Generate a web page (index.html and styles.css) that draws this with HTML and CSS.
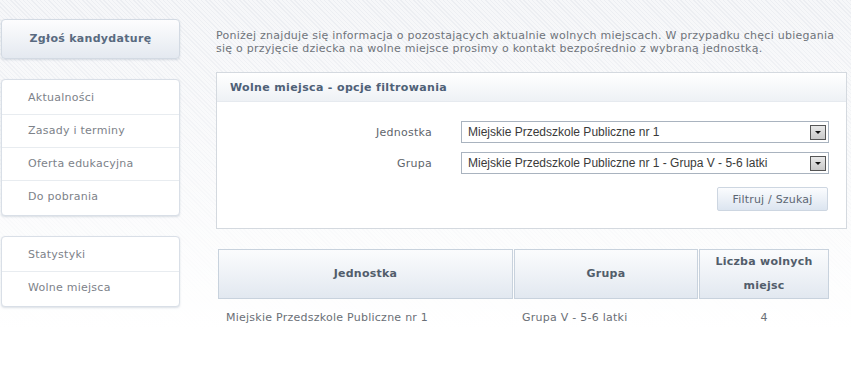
FILE: index.html
```html
<!DOCTYPE html>
<html lang="pl">
<head>
  <meta charset="UTF-8">
  <title>Wolne miejsca</title>
  <link rel="stylesheet" href="styles.css">
</head>
<body>
  <div class="page">
    <div class="sidebar">
      <a class="apply" href="#">Zgłoś kandydaturę</a>
      <ul class="menu">
        <li>Aktualności</li>
        <li>Zasady i terminy</li>
        <li>Oferta edukacyjna</li>
        <li>Do pobrania</li>
      </ul>
      <ul class="menu">
        <li>Statystyki</li>
        <li>Wolne miejsca</li>
      </ul>
    </div>

    <div class="main">
      <p class="intro">Poniżej znajduje się informacja o pozostających aktualnie wolnych miejscach. W przypadku chęci ubiegania się o przyjęcie dziecka na wolne miejsce prosimy o kontakt bezpośrednio z wybraną jednostką.</p>

      <div class="filter">
        <div class="filter-head">Wolne miejsca - opcje filtrowania</div>
        <div class="filter-body">
          <div class="row">
            <label>Jednostka</label>
            <div class="select"><span>Miejskie Przedszkole Publiczne nr 1</span><i class="arrow"></i></div>
          </div>
          <div class="row">
            <label>Grupa</label>
            <div class="select"><span>Miejskie Przedszkole Publiczne nr 1 - Grupa V - 5-6 latki</span><i class="arrow"></i></div>
          </div>
          <div class="actions">
            <button class="btn">Filtruj / Szukaj</button>
          </div>
        </div>
      </div>

      <table class="results">
        <tr>
          <th class="c1">Jednostka</th>
          <th class="c2">Grupa</th>
          <th class="c3">Liczba wolnych miejsc</th>
        </tr>
        <tr>
          <td>Miejskie Przedszkole Publiczne nr 1</td>
          <td>Grupa V - 5-6 latki</td>
          <td class="num">4</td>
        </tr>
      </table>
    </div>
  </div>
</body>
</html>
```

FILE: styles.css
```css
body {
  margin: 0;
  font-family: "DejaVu Sans", Verdana, sans-serif;
  font-size: 11px;
  letter-spacing: 0.25px;
  color: #6f747b;
  background:
    linear-gradient(to bottom, rgba(255,255,255,0) 0, #fff 330px),
    repeating-linear-gradient(45deg, #eceef2 0, #eceef2 1px, #f6f7f9 1px, #f6f7f9 3px);
  height: 368px;
}

.page {
  display: flex;
  align-items: flex-start;
}

.sidebar {
  width: 180px;
  padding-top: 19px;
}

.apply {
  display: block;
  height: 38px;
  line-height: 38px;
  margin-left: 1px;
  text-align: center;
  font-weight: bold;
  font-size: 11px;
  letter-spacing: 0.3px;
  color: #596a80;
  text-decoration: none;
  border: 1px solid #d3dae3;
  border-radius: 4px;
  background: linear-gradient(#fdfdfe, #e4e9f0);
  box-shadow: 0 1px 2px rgba(120,135,160,0.25);
}

.menu {
  list-style: none;
  margin: 20px 0 0 1px;
  padding: 2px 0;
  background: #fff;
  border: 1px solid #d9dfe7;
  border-radius: 4px;
  box-shadow: 0 1px 2px rgba(120,135,160,0.25);
}

.menu li {
  height: 32px;
  line-height: 32px;
  padding-left: 26px;
  border-top: 1px solid #e8ecf0;
  color: #7d8289;
}

.menu li:first-child {
  border-top: none;
}

.main {
  margin-left: 36px;
  width: 631px;
}

.intro {
  margin: 29px 0 0;
  line-height: 13px;
}

.filter {
  margin-top: 17px;
  border: 1px solid #d4d9df;
  background: #fff;
  height: 155px;
}

.filter-head {
  height: 28px;
  line-height: 30px;
  padding-left: 13px;
  font-weight: bold;
  letter-spacing: 0.35px;
  color: #4f6177;
  background: linear-gradient(#ffffff, #eef1f5);
  border-bottom: 1px solid #e6eaef;
}

.filter-body {
  padding-top: 19px;
}

.row {
  display: flex;
  align-items: center;
  margin-bottom: 9px;
}

.row label {
  width: 215px;
  text-align: right;
  padding-right: 29px;
  color: #60656c;
}

.select {
  display: flex;
  align-items: center;
  justify-content: space-between;
  width: 360px;
  height: 20px;
  border: 1px solid #a9b3bf;
  background: #fff;
  padding-left: 6px;
  font-family: "Liberation Sans", Arial, sans-serif;
  font-size: 12px;
  letter-spacing: 0;
  color: #3a3a3a;
}

.arrow {
  width: 14px;
  height: 13px;
  margin-right: 2px;
  border: 1px solid #555;
  background: linear-gradient(#e8e8e8, #c9c9c9);
  position: relative;
}

.arrow::after {
  content: "";
  position: absolute;
  left: 4px;
  top: 5px;
  border-left: 3px solid transparent;
  border-right: 3px solid transparent;
  border-top: 3px solid #111;
}

.actions {
  display: flex;
  justify-content: flex-end;
  padding-right: 18px;
  padding-top: 4px;
}

.btn {
  width: 111px;
  height: 24px;
  font-family: "DejaVu Sans", Verdana, sans-serif;
  font-size: 11px;
  letter-spacing: 0.2px;
  color: #5c6673;
  border: 1px solid #cdd6e1;
  border-radius: 2px;
  background: linear-gradient(#fbfcfe, #dce5f0);
}

.results {
  margin: 20px 0 0 1px;
  border-collapse: separate;
  border-spacing: 1px 0;
  width: 613px;
  table-layout: fixed;
}

.results th {
  height: 46px;
  padding: 0 6px;
  border: 1px solid #c8d2dd;
  background: linear-gradient(#fbfcfd, #e2e8f0);
  color: #525d6b;
  font-size: 11px;
  line-height: 24px;
}

.results .c1 { width: 281px; }
.results .c2 { width: 170px; }
.results .c3 { width: 116px; }

.results td {
  padding: 12px 0 0 8px;
  color: #6a6f76;
}

.results td.num {
  text-align: center;
  padding-left: 0;
}
```
